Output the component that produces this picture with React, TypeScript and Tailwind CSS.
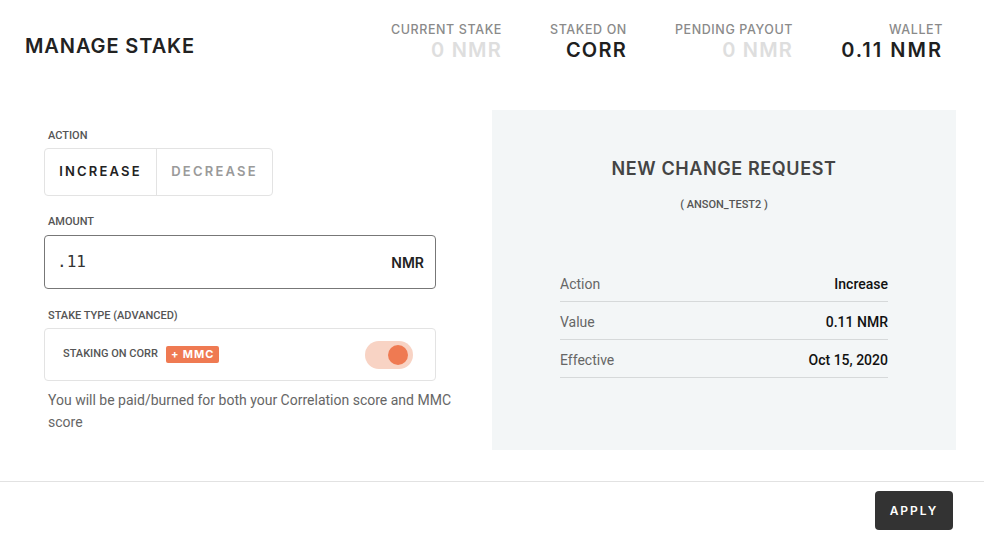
const HEAD = "font-['Inter',sans-serif]"

const STATS = [
  { label: 'CURRENT STAKE', value: '0 NMR', muted: true },
  { label: 'STAKED ON', value: 'CORR', muted: false },
  { label: 'PENDING PAYOUT', value: '0 NMR', muted: true },
  { label: 'WALLET', value: '0.11 NMR', muted: false },
]

const ROWS = [
  { label: 'Action', value: 'Increase' },
  { label: 'Value', value: '0.11 NMR' },
  { label: 'Effective', value: 'Oct 15, 2020' },
]

function FieldLabel({ children }: { children: string }) {
  return <div className="pl-[4px] text-[11px] leading-[14px] font-medium text-[#555]">{children}</div>
}

export default function App() {
  return (
    <div className="w-[984px] h-[542px] bg-white flex flex-col font-['Roboto',sans-serif] text-[#222]">
      {/* Header */}
      <div className="h-[110px] shrink-0 flex justify-between items-start pl-[25px] pr-[41px] pt-[22px]">
        <h1 className={`${HEAD} mt-[12px] text-[20px] leading-[24px] font-semibold tracking-[0.9px] text-[#222]`}>
          MANAGE STAKE
        </h1>
        <div className="flex gap-[48px]">
          {STATS.map(s => (
            <div key={s.label} className={`${HEAD} text-right`}>
              <div className="text-[12.5px] leading-[16px] font-medium tracking-[0.6px] text-[#8a8a8a]">{s.label}</div>
              <div
                className={`text-[20px] leading-[24px] font-semibold tracking-[1.2px] ${
                  s.muted ? 'text-[#dedede]' : 'text-[#1f1f1f]'
                } ${s.label === 'WALLET' ? 'tracking-[2px]' : ''}`}
              >
                {s.value}
              </div>
            </div>
          ))}
        </div>
      </div>

      {/* Body */}
      <div className="h-[372px] shrink-0 flex pl-[44px] pr-[28px] border-b border-[#e2e2e2]">
        <div className="w-[420px] pt-[19px]">
          <FieldLabel>ACTION</FieldLabel>
          <div className={`${HEAD} mt-[5px] flex w-[229px] h-[48px] border border-[#e3e3e3] rounded-[4px] text-[13px] font-semibold tracking-[2.2px]`}>
            <div className="w-[112px] flex items-center justify-center border-r border-[#e3e3e3] text-[#222]">INCREASE</div>
            <div className="flex-1 flex items-center justify-center text-[#9a9a9a]">DECREASE</div>
          </div>

          <div className="mt-[19px]">
            <FieldLabel>AMOUNT</FieldLabel>
          </div>
          <div className="mt-[6px] w-[392px] h-[54px] border border-[#777] rounded-[4px] flex items-center justify-between pl-[12px] pr-[11px]">
            <span className="font-['DejaVu_Sans_Mono',monospace] text-[16px] text-[#333]">.11</span>
            <span className={`${HEAD} text-[14px] font-semibold text-[#222]`}>NMR</span>
          </div>

          <div className="mt-[20px]">
            <FieldLabel>STAKE TYPE (ADVANCED)</FieldLabel>
          </div>
          <div className="mt-[5px] w-[392px] h-[53px] border border-[#e3e3e3] rounded-[4px] flex items-center pl-[18px] pr-[22px]">
            <span className="text-[11px] font-medium text-[#555]">STAKING ON CORR</span>
            <span className={`${HEAD} ml-[8px] h-[17px] px-[5px] rounded-[2px] bg-[#ef7a52] text-white text-[11px] font-bold tracking-[0.9px] flex items-center`}>
              + MMC
            </span>
            <div className="ml-auto w-[48px] h-[28px] rounded-full bg-[#f8d3c4] flex items-center justify-end pr-[5px]">
              <div className="w-[20px] h-[20px] rounded-full bg-[#ef7a52]" />
            </div>
          </div>

          <p className="mt-[8px] pl-[4px] text-[14px] leading-[22px] text-[#666]">
            You will be paid/burned for both your Correlation score and MMC score
          </p>
        </div>

        <div className="ml-auto w-[464px] h-[340px] bg-[#f3f6f7] pt-[48px] px-[68px]">
          <div className={`${HEAD} text-center text-[18px] leading-[22px] font-semibold tracking-[0.6px] text-[#444]`}>
            NEW CHANGE REQUEST
          </div>
          <div className="mt-[18px] text-center text-[11px] leading-[14px] font-medium text-[#555]">( ANSON_TEST2 )</div>
          <div className="mt-[52px]">
            {ROWS.map(r => (
              <div key={r.label} className="h-[38px] flex items-center justify-between border-b border-[#d6d9da] pt-[4px]">
                <span className="text-[14px] text-[#666]">{r.label}</span>
                <span className="text-[14px] font-medium text-[#111]">{r.value}</span>
              </div>
            ))}
          </div>
        </div>
      </div>

      {/* Footer */}
      <div className="flex-1 flex justify-end items-start pr-[31px] pt-[9px]">
        <button className={`${HEAD} w-[78px] h-[39px] rounded-[4px] bg-[#333] text-white text-[12px] font-semibold tracking-[2px]`}>
          APPLY
        </button>
      </div>
    </div>
  )
}
